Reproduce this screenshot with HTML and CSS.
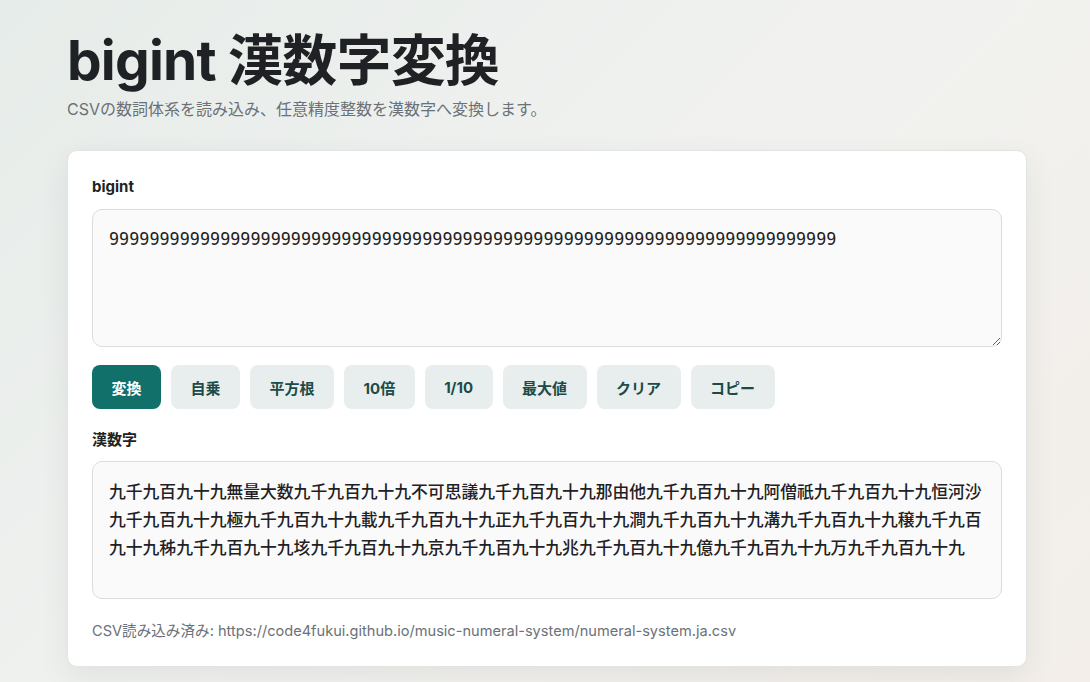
FILE: index.html
```html
<!DOCTYPE html>
<html lang="ja">
<head>
    <meta charset="UTF-8">
    <meta name="viewport" content="width=device-width, initial-scale=1.0">
    <title>bigint 漢数字変換</title>
    <link rel="stylesheet" href="styles.css">
</head>
<body>
    <main class="container">
        <header class="page-header">
            <h1>bigint 漢数字変換</h1>
            <p class="lead">CSVの数詞体系を読み込み、任意精度整数を漢数字へ変換します。</p>
        </header>

        <section class="card">
            <label class="field-label" for="bigint">bigint</label>
            <textarea id="bigint" class="num-input" spellcheck="false">999999999999999999999999999999999999999999999999999999999999999999999999</textarea>

            <div class="actions">
                <button class="btn btn-primary">変換</button>
                <button class="btn">自乗</button>
                <button class="btn">平方根</button>
                <button class="btn">10倍</button>
                <button class="btn">1/10</button>
                <button class="btn">最大値</button>
                <button class="btn">クリア</button>
                <button class="btn">コピー</button>
            </div>

            <div class="field-label">漢数字</div>
            <div class="output">九千九百九十九無量大数九千九百九十九不可思議九千九百九十九那由他九千九百九十九阿僧祇九千九百九十九恒河沙九千九百九十九極九千九百九十九載九千九百九十九正九千九百九十九澗九千九百九十九溝九千九百九十九穣九千九百九十九秭九千九百九十九垓九千九百九十九京九千九百九十九兆九千九百九十九億九千九百九十九万九千九百九十九</div>

            <p class="status">CSV読み込み済み: https://code4fukui.github.io/music-numeral-system/numeral-system.ja.csv</p>
        </section>
    </main>
</body>
</html>
```

FILE: styles.css
```css
* {
    box-sizing: border-box;
}
html, body {
    height: 100%;
}
body {
    margin: 0;
    padding-left: 4px;
    font-family: Inter, "Noto Sans CJK JP", sans-serif;
    color: #1f2328;
    background: linear-gradient(135deg, #e6ece9 0%, #f1f2f0 50%, #f3eee9 100%);
    overflow: hidden;
}
.container {
    width: 960px;
    margin: 0 auto;
    padding-top: 26px;
}
.page-header h1 {
    margin: 0;
    font-size: 55px;
    line-height: 68px;
    font-weight: 700;
    letter-spacing: -0.8px;
    color: #1f2124;
}
.lead {
    margin: 4px 0 0;
    font-size: 16px;
    line-height: 22px;
    color: #6b7178;
}
.card {
    margin-top: 30px;
    background: #fff;
    border: 1px solid #e2e4e3;
    border-radius: 10px;
    padding: 24px 24px 25px;
    box-shadow: 0 10px 30px rgba(40, 50, 45, 0.08);
}
.field-label {
    display: block;
    font-size: 15px;
    font-weight: 700;
    line-height: 24px;
    color: #222;
    margin-bottom: 10px;
}
.num-input {
    display: block;
    width: 100%;
    height: 138px;
    padding: 16px 16px;
    font-family: "DejaVu Sans Mono", monospace;
    font-size: 16.8px;
    line-height: 27px;
    color: #222;
    background: #fafafa;
    border: 1px solid #dcdcdc;
    border-radius: 10px;
    resize: vertical;
    outline: none;
}
.actions {
    display: flex;
    gap: 10px;
    margin: 18px 0 19px;
}
.actions + .field-label {
    margin-bottom: 9px;
}
.btn {
    height: 44px;
    padding: 0 19.5px;
    font-family: Inter, "Noto Sans CJK JP", sans-serif;
    font-size: 15px;
    font-weight: 700;
    color: #1c4b47;
    background: #e8eeed;
    border: none;
    border-radius: 8px;
    cursor: pointer;
}
.btn:hover {
    background: #dfe7e5;
}
.btn-primary {
    color: #fff;
    background: #12706a;
}
.btn-primary:hover {
    background: #0f625d;
}
.output {
    min-height: 138px;
    padding: 15px 16px;
    font-family: "Noto Sans CJK JP", sans-serif;
    font-size: 16.8px;
    line-height: 28px;
    font-weight: 500;
    color: #1f2124;
    background: #fafafa;
    border: 1px solid #dcdcdc;
    border-radius: 10px;
    word-break: break-all;
}
.status {
    margin: 22px 0 0;
    font-size: 14.6px;
    line-height: 20px;
    color: #6b7178;
}
```
